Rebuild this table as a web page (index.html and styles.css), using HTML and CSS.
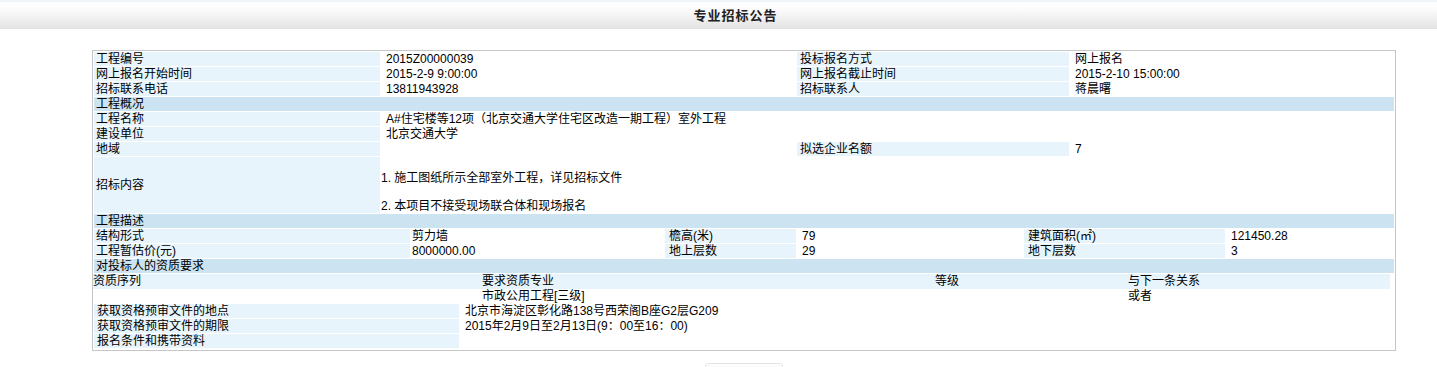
FILE: index.html
```html
<!DOCTYPE html>
<html lang="zh-CN">
<head>
<meta charset="utf-8">
<title>专业招标公告</title>
<link rel="stylesheet" href="styles.css">
</head>
<body>
<div class="topbar"><h1 class="title">专业招标公告</h1></div>

<div class="box">
  <div class="grid grid-main">
    <div class="lab">工程编号</div><div class="val">2015Z00000039</div><div class="lab lab-r">投标报名方式</div><div class="val">网上报名</div>
    <div class="lab">网上报名开始时间</div><div class="val">2015-2-9 9:00:00</div><div class="lab lab-r">网上报名截止时间</div><div class="val">2015-2-10 15:00:00</div>
    <div class="lab">招标联系电话</div><div class="val">13811943928</div><div class="lab lab-r">招标联系人</div><div class="val">蒋晨曙</div>
    <div class="sec span4">工程概况</div>
    <div class="lab">工程名称</div><div class="val span3">A#住宅楼等12项（北京交通大学住宅区改造一期工程）室外工程</div>
    <div class="lab">建设单位</div><div class="val span3">北京交通大学</div>
    <div class="lab">地域</div><div class="val"></div><div class="lab lab-r">拟选企业名额</div><div class="val">7</div>
    <div class="lab lab-mid">招标内容</div>
    <div class="val content span3">
      <p>1.&nbsp;施工图纸所示全部室外工程，详见招标文件</p>
      <p>2.&nbsp;本项目不接受现场联合体和现场报名</p>
    </div>
    <div class="sec span4">工程描述</div>
  </div>

  <div class="grid grid-desc">
    <div class="lab">结构形式</div><div class="val v1">剪力墙</div><div class="lab lab-c">檐高(米)</div><div class="val">79</div><div class="lab lab-c">建筑面积(㎡)</div><div class="val">121450.28</div>
    <div class="lab">工程暂估价(元)</div><div class="val v1">8000000.00</div><div class="lab lab-c">地上层数</div><div class="val">29</div><div class="lab lab-c">地下层数</div><div class="val">3</div>
    <div class="sec span6">对投标人的资质要求</div>
  </div>

  <div class="grid grid-qual">
    <div class="qh">资质序列</div><div class="qh">要求资质专业</div><div class="qh">等级</div><div class="qh">与下一条关系</div>
    <div class="qd"></div><div class="qd">市政公用工程[三级]</div><div class="qd"></div><div class="qd">或者</div>
  </div>

  <div class="grid grid-doc">
    <div class="lab lab-d">获取资格预审文件的地点</div><div class="val">北京市海淀区彰化路138号西荣阁B座G2层G209</div>
    <div class="lab lab-d">获取资格预审文件的期限</div><div class="val">2015年2月9日至2月13日(9：00至16：00)</div>
    <div class="lab lab-d">报名条件和携带资料</div><div class="val"></div>
  </div>
</div>

<div class="actions"><button class="btn" type="button" aria-label="关闭"></button></div>
</body>
</html>
```

FILE: styles.css
```css
html, body {
  margin: 0;
  padding: 0;
  background: #ffffff;
}

body {
  font-family: "Liberation Sans", "Noto Sans CJK SC", Arial, sans-serif;
  font-size: 12px;
  color: #000;
  overflow: hidden;
}

.topbar {
  height: 27px;
  border-top: 2px solid #eef4f8;
  background: linear-gradient(to bottom, #ffffff 0%, #fbfbfb 30%, #e2e2e2 100%);
  display: flex;
  align-items: center;
  justify-content: center;
  padding-left: 34px;
}

.title {
  margin: 0;
  font-size: 13px;
  font-weight: bold;
  letter-spacing: 1px;
  line-height: 16px;
  color: #222;
}

.box {
  margin: 21px 0 0 92px;
  width: 1300px;
  border: 1px solid #c6c6c6;
  padding: 1px 1px 2px 1px;
  display: flex;
  flex-direction: column;
  gap: 1px;
}

.grid {
  display: grid;
  gap: 1px;
}

.grid-main {
  grid-template-columns: 286px 415px 272px 324px;
}

.grid-desc {
  grid-template-columns: 316px 253px 131px 226px 201px 168px;
}

.grid-qual {
  grid-template-columns: 389px 453px 193px 262px;
  gap: 0;
  margin-left: -1px;
  width: 1297px;
}

.grid-doc {
  grid-template-columns: 365px 934px;
}

.lab, .val, .sec, .qh, .qd {
  line-height: 14px;
  min-height: 14px;
  white-space: nowrap;
}

.lab {
  background: #e7f4fc;
  padding-left: 2px;
}

.lab-r {
  padding-left: 3px;
}

.lab-c {
  padding-left: 4px;
}

.lab-d {
  padding-left: 3px;
}

.lab-mid {
  display: flex;
  align-items: center;
}

.val {
  background: #fff;
  padding-left: 5px;
}

.v1 {
  padding-left: 1px;
}

.sec {
  background: #cce4f2;
  padding-left: 2px;
}

.span3 { grid-column: span 3; }
.span4 { grid-column: span 4; }
.span6 { grid-column: span 6; }

.content {
  padding: 14px 0 0 0;
}

.content p {
  margin: 0;
  line-height: 14px;
}

.content p + p {
  margin-top: 14px;
}

.qh {
  background: #e7f4fc;
  height: 15px;
  line-height: 15px;
}

.qd {
  background: #fff;
}

.actions {
  display: flex;
  justify-content: center;
  margin: 12px 0 0 92px;
  width: 1304px;
}

.btn {
  width: 78px;
  height: 24px;
  border: 1px solid #e4e4e4;
  border-radius: 3px;
  background: linear-gradient(to bottom, #fdfdfd, #e9e9e9);
}
```
